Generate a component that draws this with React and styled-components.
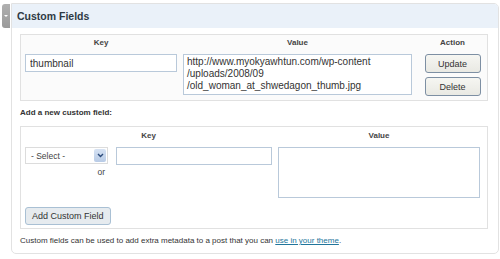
import styled, { createGlobalStyle } from 'styled-components';

const GlobalStyle = createGlobalStyle`
  body {
    margin: 0;
    background: #ffffff;
    font-family: "Liberation Sans", Arial, sans-serif;
    color: #333333;
  }
`;

const Page = styled.div`
  width: 500px;
  height: 259px;
  padding: 3px 0 0 2px;
  box-sizing: border-box;
  display: flex;
  align-items: flex-start;
`;

const Handle = styled.div`
  width: 8px;
  height: 24px;
  margin-top: 1px;
  margin-right: 1px;
  background: linear-gradient(#b0b0b0, #9a9a9a);
  border-radius: 3px 0 0 3px;
  display: flex;
  align-items: center;
  justify-content: center;

  &::after {
    content: '';
    width: 0;
    height: 0;
    border-left: 2px solid transparent;
    border-right: 2px solid transparent;
    border-top: 2px solid #ffffff;
  }
`;

const Panel = styled.div`
  width: 486px;
  border: 1px solid #e2e2e2;
  border-radius: 0 5px 5px 5px;
  background: #ffffff;
  padding-bottom: 7px;
`;

const Header = styled.div`
  height: 24px;
  background: #eaf1f9;
  display: flex;
  align-items: center;
  padding-left: 5px;
  font-size: 10.5px;
  font-weight: bold;
  color: #2e3a44;
  border-radius: 0 4px 0 0;
`;

const Body = styled.div`
  padding: 6px 10px 0 8px;
`;

const Table = styled.div`
  border: 1px solid #e1e1e1;
  background: ${(p) => (p.$shade ? '#fbfbfb' : '#ffffff')};
  display: grid;
  grid-template-columns: ${(p) => p.$cols};
  column-gap: 6px;
  row-gap: 4px;
  padding: ${(p) => p.$pad};
`;

const Th = styled.div`
  font-size: 8px;
  font-weight: bold;
  line-height: 14px;
  text-align: center;
  color: #444;
`;

const TextInput = styled.input`
  box-sizing: border-box;
  width: ${(p) => p.$w}px;
  height: 18px;
  border: 1px solid #b9c9da;
  background: #ffffff;
  padding: 0 4px;
  font-family: "Liberation Sans", Arial, sans-serif;
  font-size: 10px;
  color: #333;
  outline: none;
`;

const TextArea = styled.textarea`
  box-sizing: border-box;
  width: ${(p) => p.$w}px;
  height: ${(p) => p.$h}px;
  border: 1px solid #b9c9da;
  background: #ffffff;
  padding: 1px 3px;
  font-family: "Liberation Sans", Arial, sans-serif;
  font-size: 10px;
  line-height: 12px;
  color: #333;
  resize: none;
  overflow: hidden;
  outline: none;
  display: block;
`;

const ActionCol = styled.div`
  display: flex;
  flex-direction: column;
  align-items: center;
  gap: 4px;
`;

const Button = styled.button`
  box-sizing: border-box;
  width: ${(p) => (p.$w ? `${p.$w}px` : 'auto')};
  height: ${(p) => p.$h || 19}px;
  padding: 0 6px;
  border: 1px solid ${(p) => (p.$soft ? '#a9c0d4' : '#7d8fa3')};
  border-radius: 3px;
  background: ${(p) => (p.$soft ? '#e6ebef' : 'linear-gradient(#f6f6f2, #e9e9e3)')};
  font-family: "Liberation Sans", Arial, sans-serif;
  font-size: 9px;
  color: #333;
  cursor: pointer;
`;

const Label = styled.div`
  margin: 6px 0 7px;
  font-size: 8px;
  font-weight: bold;
  line-height: 12px;
  color: #333;
`;

const KeyCell = styled.div`
  display: flex;
  align-items: flex-start;
  gap: 8px;
`;

const SelectCol = styled.div`
  display: flex;
  flex-direction: column;
  align-items: flex-end;
`;

const SelectBox = styled.div`
  box-sizing: border-box;
  width: 83px;
  height: 17px;
  border: 1px solid #dcdcdc;
  background: #ffffff;
  display: flex;
  align-items: center;
  justify-content: space-between;
  padding: 0 1px 0 5px;
  font-size: 8.5px;
  color: #444;
`;

const Arrow = styled.span`
  width: 12px;
  height: 13px;
  background: linear-gradient(#d6e2f3, #b8cbe6);
  border-radius: 2px;
  display: flex;
  align-items: center;
  justify-content: center;
`;

const Or = styled.span`
  font-size: 8.5px;
  line-height: 12px;
  margin: 2px 3px 0 0;
  color: #444;
`;

const ButtonRow = styled.div`
  grid-column: 1 / -1;
  padding-top: 3px;
`;

const Note = styled.p`
  margin: 6px 0 0;
  font-size: 8px;
  line-height: 11px;
  color: #333;

  a {
    color: #21759b;
    text-decoration: underline;
  }
`;

const value = 'http://www.myokyawhtun.com/wp-content\n/uploads/2008/09\n/old_woman_at_shwedagon_thumb.jpg';

export default function App() {
  return (
    <>
      <GlobalStyle />
      <Page>
        <Handle />
        <Panel>
          <Header>Custom Fields</Header>
          <Body>
            <Table $shade $cols="152px 229px 1fr" $pad="1px 0 4px 4px">
              <Th>Key</Th>
              <Th>Value</Th>
              <Th>Action</Th>
              <TextInput $w={152} defaultValue="thumbnail" />
              <TextArea $w={229} $h={41} defaultValue={value} />
              <ActionCol>
                <Button $w={56}>Update</Button>
                <Button $w={56}>Delete</Button>
              </ActionCol>
            </Table>

            <Label>Add a new custom field:</Label>

            <Table $cols="247px 202px" $pad="2px 0 3px 4px">
              <Th>Key</Th>
              <Th>Value</Th>
              <KeyCell>
                <SelectCol>
                  <SelectBox>
                    - Select -
                    <Arrow>
                      <svg width="7" height="5" viewBox="0 0 7 5">
                        <path d="M1 1 L3.5 3.5 L6 1" fill="none" stroke="#2b4a7a" strokeWidth="1.4" />
                      </svg>
                    </Arrow>
                  </SelectBox>
                  <Or>or</Or>
                </SelectCol>
                <TextInput $w={157} />
              </KeyCell>
              <TextArea $w={202} $h={51} />
              <ButtonRow>
                <Button $soft $h={18}>Add Custom Field</Button>
              </ButtonRow>
            </Table>

            <Note>
              Custom fields can be used to add extra metadata to a post that you can{' '}
              <a href="#">use in your theme</a>.
            </Note>
          </Body>
        </Panel>
      </Page>
    </>
  );
}
